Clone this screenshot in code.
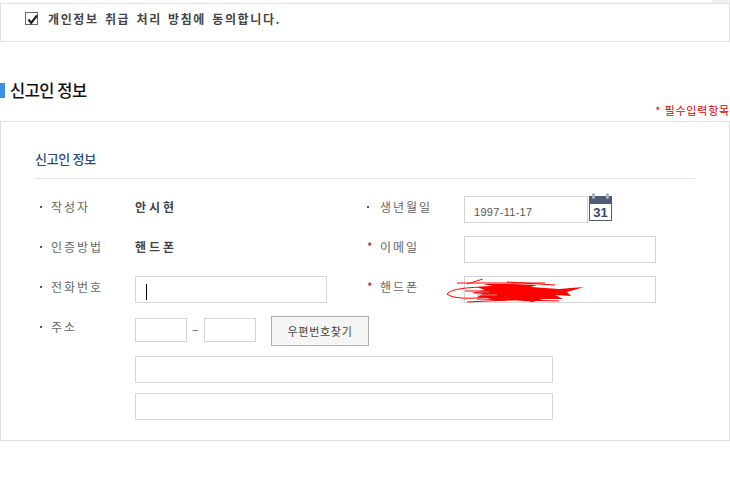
<div class="page">
  <div class="scrollbit"></div>
  <div class="agree">
    <label class="check">
      <span class="box">
        <svg width="13" height="13" viewBox="0 0 13 13"><path d="M2.5 6.5 L5.2 10 L11 2.5" fill="none" stroke="#222" stroke-width="2.2" /></svg>
      </span>
      <span>개인정보 취급 처리 방침에 동의합니다.</span>
    </label>
  </div>

  <div class="heading">
    <h2>신고인 정보</h2>
  </div>
  <p class="required">* 필수입력항목</p>

  <section class="panel">
    <h3>신고인 정보</h3>

    <div class="row">
      <div class="col left">
        <span class="label"><i class="dot"></i>작성자</span>
        <strong>안시현</strong>
      </div>
      <div class="col">
        <span class="label"><i class="dot"></i>생년월일</span>
        <div class="date">1997-11-17</div>
        <svg class="cal" width="24" height="28" viewBox="0 0 24 28">
          <rect x="0.5" y="3.5" width="22" height="24" fill="#fff" stroke="#4f5c78" />
          <rect x="0" y="3" width="23" height="8" fill="#4f5c78" />
          <rect x="3" y="0" width="3" height="6" rx="1.5" fill="#a9b0bf" />
          <rect x="17" y="0" width="3" height="6" rx="1.5" fill="#a9b0bf" />
          <text x="11.5" y="24" text-anchor="middle" class="caltext">31</text>
        </svg>
      </div>
    </div>

    <div class="row">
      <div class="col left">
        <span class="label"><i class="dot"></i>인증방법</span>
        <strong>핸드폰</strong>
      </div>
      <div class="col">
        <span class="label"><i class="star">*</i>이메일</span>
        <div class="input wide"></div>
      </div>
    </div>

    <div class="row">
      <div class="col left">
        <span class="label"><i class="dot"></i>전화번호</span>
        <div class="input wide"><span class="caret"></span></div>
      </div>
      <div class="col">
        <span class="label"><i class="star">*</i>핸드폰</span>
        <div class="input wide"></div>
        <svg class="scribble" width="140" height="26" viewBox="0 0 140 26">
          <path d="M10 4 L98 4 M36 0 L20 5 M0 15 C4 10 20 8 44 8 M0 15 C6 20 24 20 40 18 M20 23 L60 21 M18 12 L50 12 M60 3 L108 6 M30 20 L112 22" fill="none" stroke="#f00" stroke-width="1" />
          <path d="M36 5 L66 5 L90 6 L84 8 L112 10 L137 8 L120 13 L124 17 L108 16 L116 20 L96 20 L86 23 L70 21 L50 22 L40 19 L30 18 L36 15 L24 14 L38 11 L30 8 L46 7 Z" fill="#f00" />
          <path d="M30 16 L50 16 M30 13 L42 13" fill="none" stroke="#c98080" stroke-width="1" />
        </svg>
      </div>
    </div>

    <div class="row address">
      <div class="col left">
        <span class="label"><i class="dot"></i>주소</span>
        <div class="zip"></div>
        <span class="dash">–</span>
        <div class="zip"></div>
        <button type="button">우편번호찾기</button>
      </div>
    </div>

    <div class="input long"></div>
    <div class="input long"></div>
  </section>
</div>

<style>
  :global(body) {
    margin: 0;
    background: #fff;
  }

  .page {
    position: relative;
    width: 730px;
    height: 479px;
    overflow: hidden;
    font-family: "Noto Sans CJK KR", "Liberation Sans", sans-serif;
    color: #555;
    font-size: 12px;
  }

  .scrollbit {
    position: absolute;
    top: 0;
    right: 0;
    width: 18px;
    height: 3px;
    background: #eee;
  }

  .agree {
    margin-top: 3px;
    height: 29px;
    padding: 0 0 8px 24px;
    border: 1px solid #e0e0e0;
    display: flex;
    align-items: center;
  }

  .check {
    display: flex;
    align-items: center;
    gap: 10px;
    font-size: 12px;
    font-weight: 700;
    letter-spacing: 1.6px;
    word-spacing: 2px;
    color: #444;
  }

  .box {
    width: 11px;
    height: 11px;
    border: 1px solid #666;
    display: block;
    position: relative;
    background: #fff;
  }

  .box svg {
    position: absolute;
    top: 0;
    left: 0;
  }

  .heading {
    margin-top: 41px;
    height: 15px;
    border-left: 5px solid #3d8fe0;
    padding-left: 5px;
    display: flex;
    align-items: center;
  }

  h2 {
    margin: 0 0 2px;
    font-size: 16.5px;
    font-weight: 500;
    color: #111;
    letter-spacing: -0.5px;
  }

  .required {
    margin: 5px 0 0;
    height: 18px;
    line-height: 14px;
    text-align: right;
    color: #e00000;
    font-size: 11px;
    letter-spacing: 0.8px;
  }

  .panel {
    height: 318px;
    border: 1px solid #e0e0e0;
    padding: 0 34px;
  }

  h3 {
    margin: 0 0 17px;
    width: 660px;
    height: 57px;
    box-sizing: border-box;
    padding-top: 27px;
    border-bottom: 1px solid #e0e0e0;
    font-size: 13px;
    line-height: 20px;
    font-weight: 500;
    color: #2b4a78;
    letter-spacing: -0.3px;
  }

  .row {
    display: flex;
    height: 40px;
  }

  .col {
    display: flex;
    align-items: flex-start;
    position: relative;
  }

  .left {
    width: 332px;
  }

  .label {
    display: flex;
    align-items: center;
    width: 97px;
    height: 21px;
    color: #666;
    letter-spacing: 2px;
    flex: none;
  }

  .left .label {
    padding-left: 5px;
    width: 95px;
  }

  .dot {
    width: 2px;
    height: 2px;
    background: #555;
    margin-right: 9px;
    flex: none;
  }

  .col:not(.left) .dot {
    margin-right: 11px;
  }

  .star {
    width: 13px;
    color: #e00000;
    font-style: normal;
    font-size: 12px;
    flex: none;
  }

  strong {
    font-weight: 700;
    color: #444;
    letter-spacing: 3px;
    line-height: 22px;
  }

  .input,
  .date,
  .zip {
    box-sizing: border-box;
    border: 1px solid #d5d5d5;
    background: #fff;
  }

  .date {
    width: 124px;
    height: 27px;
    padding: 7px 0 0 9px;
    font: 11px/16px "Liberation Sans", sans-serif;
    letter-spacing: 0.3px;
    color: #555;
  }

  .cal {
    margin: -3px 0 0 1px;
  }

  .caltext {
    font: 700 13px "Liberation Sans", sans-serif;
    fill: #3c4660;
  }

  .wide {
    width: 192px;
    height: 27px;
  }

  .caret {
    display: block;
    width: 1px;
    height: 16px;
    margin: 7px 0 0 10px;
    background: #000;
  }

  .scribble {
    position: absolute;
    left: 80px;
    top: 3px;
    pointer-events: none;
  }

  .address .left {
    width: auto;
    align-items: flex-start;
  }

  .zip {
    width: 52px;
    height: 24px;
    margin-top: 2px;
  }

  .dash {
    width: 17px;
    text-align: center;
    line-height: 26px;
    flex: none;
  }

  button {
    width: 98px;
    height: 30px;
    margin-left: 15px;
    padding: 0;
    border: 1px solid #b0b0b0;
    background: #f5f5f5;
    font: 11px "Noto Sans CJK KR", sans-serif;
    letter-spacing: 0.7px;
    color: #444;
  }

  .long {
    width: 418px;
    height: 27px;
    margin-left: 100px;
    margin-bottom: 10px;
  }
</style>
